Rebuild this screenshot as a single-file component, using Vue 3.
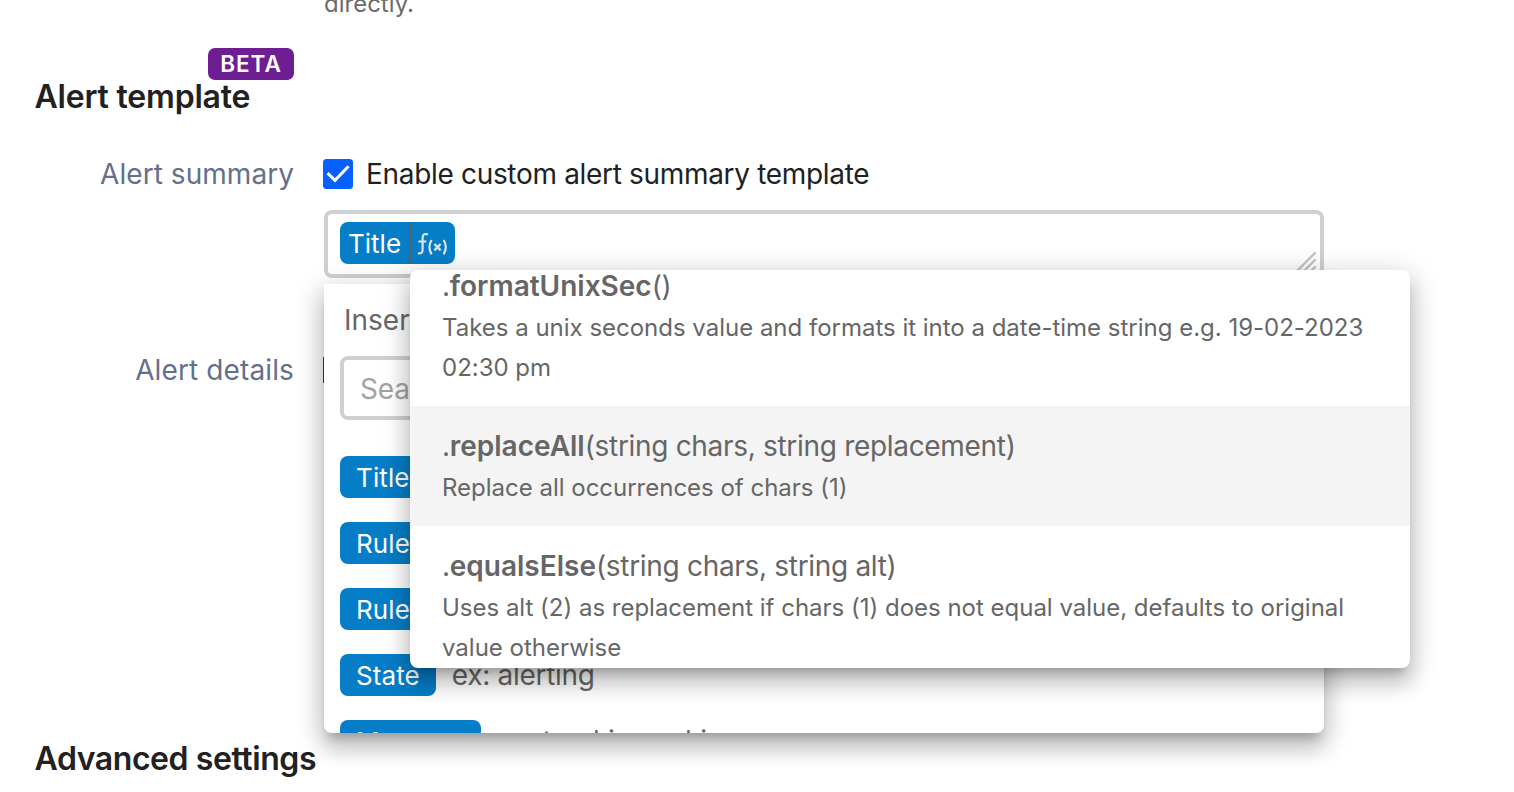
<script setup>
const fields = [
  { name: 'Title', example: '' },
  { name: 'Rule ID', example: '' },
  { name: 'Rule name', example: '' },
  { name: 'State', example: 'ex: alerting' },
  { name: 'Message', example: 'ex: tracking asking', wide: true },
]
const functions = [
  {
    name: 'formatUnixSec',
    args: '()',
    lines: ['Takes a unix seconds value and formats it into a date-time string e.g. 19-02-2023', '02:30 pm'],
  },
  { name: 'replaceAll', args: '(string chars, string replacement)', lines: ['Replace all occurrences of chars (1)'], active: true },
  {
    name: 'equalsElse',
    args: '(string chars, string alt)',
    lines: ['Uses alt (2) as replacement if chars (1) does not equal value, defaults to original', 'value otherwise'],
  },
]
</script>

<template>
  <main class="page">
    <p class="hint">directly.</p>
    <header class="section-head">
      <span class="beta"><span>BETA</span></span>
      <h2 class="heading template">Alert template</h2>
    </header>

    <div class="row summary-row">
      <label class="label summary">Alert summary</label>
      <div class="control">
        <div class="check-line">
          <svg class="checkbox" viewBox="0 0 30 30">
            <rect width="30" height="30" rx="3.5" fill="#0560ff" />
            <path d="M4.5 14.2 L12 21.3 L25.5 7.2" fill="none" stroke="#fff" stroke-width="3" />
          </svg>
          <span class="enable">Enable custom alert summary template</span>
        </div>
        <div class="editor">
          <span class="token">
            <span class="token-name">Title</span>
            <svg class="fx" viewBox="0 0 44 42" fill="none" stroke="#dfe4e8">
              <path d="M17 12.4 C12.8 11.2 11.6 12.8 11.6 16 V27.5 C11.6 30.8 10.3 31.8 7 31.2 M7.4 19.5 H15.4" stroke-width="2.2" />
              <path d="M20.6 18 Q16.2 25 20.6 32.4 M32.6 18 Q37 25 32.6 32.4" stroke-width="2.2" />
              <path d="M23.4 22 L29.6 28.4 M29.6 22 L23.4 28.4" stroke-width="2.4" />
            </svg>
          </span>
          <svg class="grip" viewBox="0 0 26 26" stroke="#c3c3c4" stroke-width="2.4" stroke-linecap="round">
            <path d="M3 21 L21 3 M10 21 L21 10 M17 21 L21 17" />
          </svg>
        </div>
      </div>
    </div>

    <div class="row details-row">
      <label class="label details">Alert details</label>
      <span class="covered-check"></span>
    </div>
    <h2 class="heading advanced">Advanced settings</h2>

    <section class="field-menu">
      <div class="menu-clip">
        <p class="insert">Insert field</p>
        <div class="search"><span>Search</span></div>
        <div v-for="field in fields" :key="field.name" class="field">
          <span class="chip" :class="{ wide: field.wide }">{{ field.name }}</span>
          <span class="example">{{ field.example }}</span>
        </div>
      </div>
    </section>

    <section class="fn-menu">
      <div class="menu-clip">
        <div v-for="fn in functions" :key="fn.name" class="fn" :class="[fn.name, { active: fn.active }]">
          <div class="signature"><span>.<b>{{ fn.name }}</b>{{ fn.args }}</span></div>
          <div v-for="line in fn.lines" :key="line" class="desc"><span>{{ line }}</span></div>
        </div>
      </div>
    </section>
  </main>
</template>

<style>
body { background: #fff; }
</style>

<style scoped>
* { box-sizing: border-box; }
.page {
  position: relative;
  width: 1514px;
  height: 792px;
  overflow: hidden;
  background: #fff;
  font-family: Inter, "Liberation Sans", sans-serif;
  font-size: 28px;
  color: #212121;
  white-space: nowrap;
}
p, h2 { margin: 0; }
.hint { height: 48px; padding-left: 324px; font-size: 24px; line-height: 32px; margin-top: -12px; color: #6b6b6c; }
.section-head { display: flex; flex-direction: column; height: 110px; padding: 12px 0 0 35px; }
.beta {
  width: 86px; height: 32px; margin-left: 173px; border-radius: 7px; background: #6e1e93; color: #fff;
  font-size: 22.5px; font-weight: 600; line-height: 32px; text-align: center; letter-spacing: 1px; flex: none;
}
.heading { font-size: 32px; font-weight: 600; line-height: 36px; letter-spacing: -0.42px; }
.template { margin: -1px 0 0 -0.5px; letter-spacing: -0.2px; }
.row { display: flex; }
.label { width: 294px; text-align: right; color: #64708a; line-height: 36px; flex: none; letter-spacing: 0.05px; }
.details { letter-spacing: 0.12px; }
.summary-row { height: 120px; margin-top: 10px; }
.control { padding-left: 29px; }
.check-line { display: flex; align-items: center; height: 36px; gap: 13px; }
.enable { letter-spacing: -0.32px; line-height: 36px; }
.checkbox { width: 30px; height: 30px; }
.editor {
  display: flex; justify-content: space-between; width: 1000px; height: 68px; margin: 18px 0 0 1px; padding: 8px 0 0 12px;
  border: 4px solid #cfd0d2; border-radius: 8px;
}
.token { display: flex; width: 115px; height: 42px; border-radius: 8px; background: #067dc7; color: #fff; overflow: hidden; }
.token-name { width: 71px; padding-left: 8px; font-size: 26px; line-height: 44px; border-right: 2px solid #5a5e66; }
.fx { width: 44px; height: 42px; }
.grip { width: 26px; height: 26px; margin: 28px 0 0; }
.details-row { margin-top: 76px; }
.covered-check { width: 30px; height: 26px; margin: 5px 0 0 29px; background: #0545c0; }
.advanced { margin: 353px 0 0 34.5px; }

.field-menu, .fn-menu {
  position: absolute; border-radius: 8px;
  box-shadow: 0 10px 10px -6px rgba(0,0,0,.2), 0 16px 20px 2px rgba(0,0,0,.14), 0 6px 28px 4px rgba(0,0,0,.16);
}
.field-menu { left: 324px; top: 284px; width: 1000px; height: 449px; border-top-left-radius: 0; border-top-right-radius: 0; background: #fff; }
.fn-menu { left: 410px; top: 270px; width: 1000px; height: 398px; background: #fff; }
.menu-clip { height: 100%; overflow: hidden; border-radius: inherit; }
.insert { padding: 18px 0 0 20px; line-height: 36px; height: 54px; color: #666; }
.search { width: 968px; height: 64px; margin: 18px 16px 36px; padding-left: 16px; border: 4px solid #cfd0d2; border-radius: 8px; line-height: 58px; color: #a3a3a3; letter-spacing: -0.1px; }
.field { display: flex; align-items: center; height: 42px; margin: 0 16px 24px; gap: 16px; }
.chip { height: 42px; padding: 0 16px; border-radius: 8px; background: #067dc7; color: #fff; font-size: 26px; line-height: 44px; letter-spacing: 0.1px; }
.chip.wide { width: 141px; }
.example { color: #666; line-height: 42px; letter-spacing: -0.3px; }
.fn { padding: 20px 32px 18px; color: #666; }
.fn:first-child { margin-top: -24px; }
.fn.active { background: #f4f4f4; }
.signature { height: 42px; line-height: 41px; letter-spacing: -0.31px; }
.signature b { font-weight: 600; letter-spacing: 0; }
.desc { height: 40px; font-size: 24px; line-height: 40px; letter-spacing: -0.01px; }
</style>
